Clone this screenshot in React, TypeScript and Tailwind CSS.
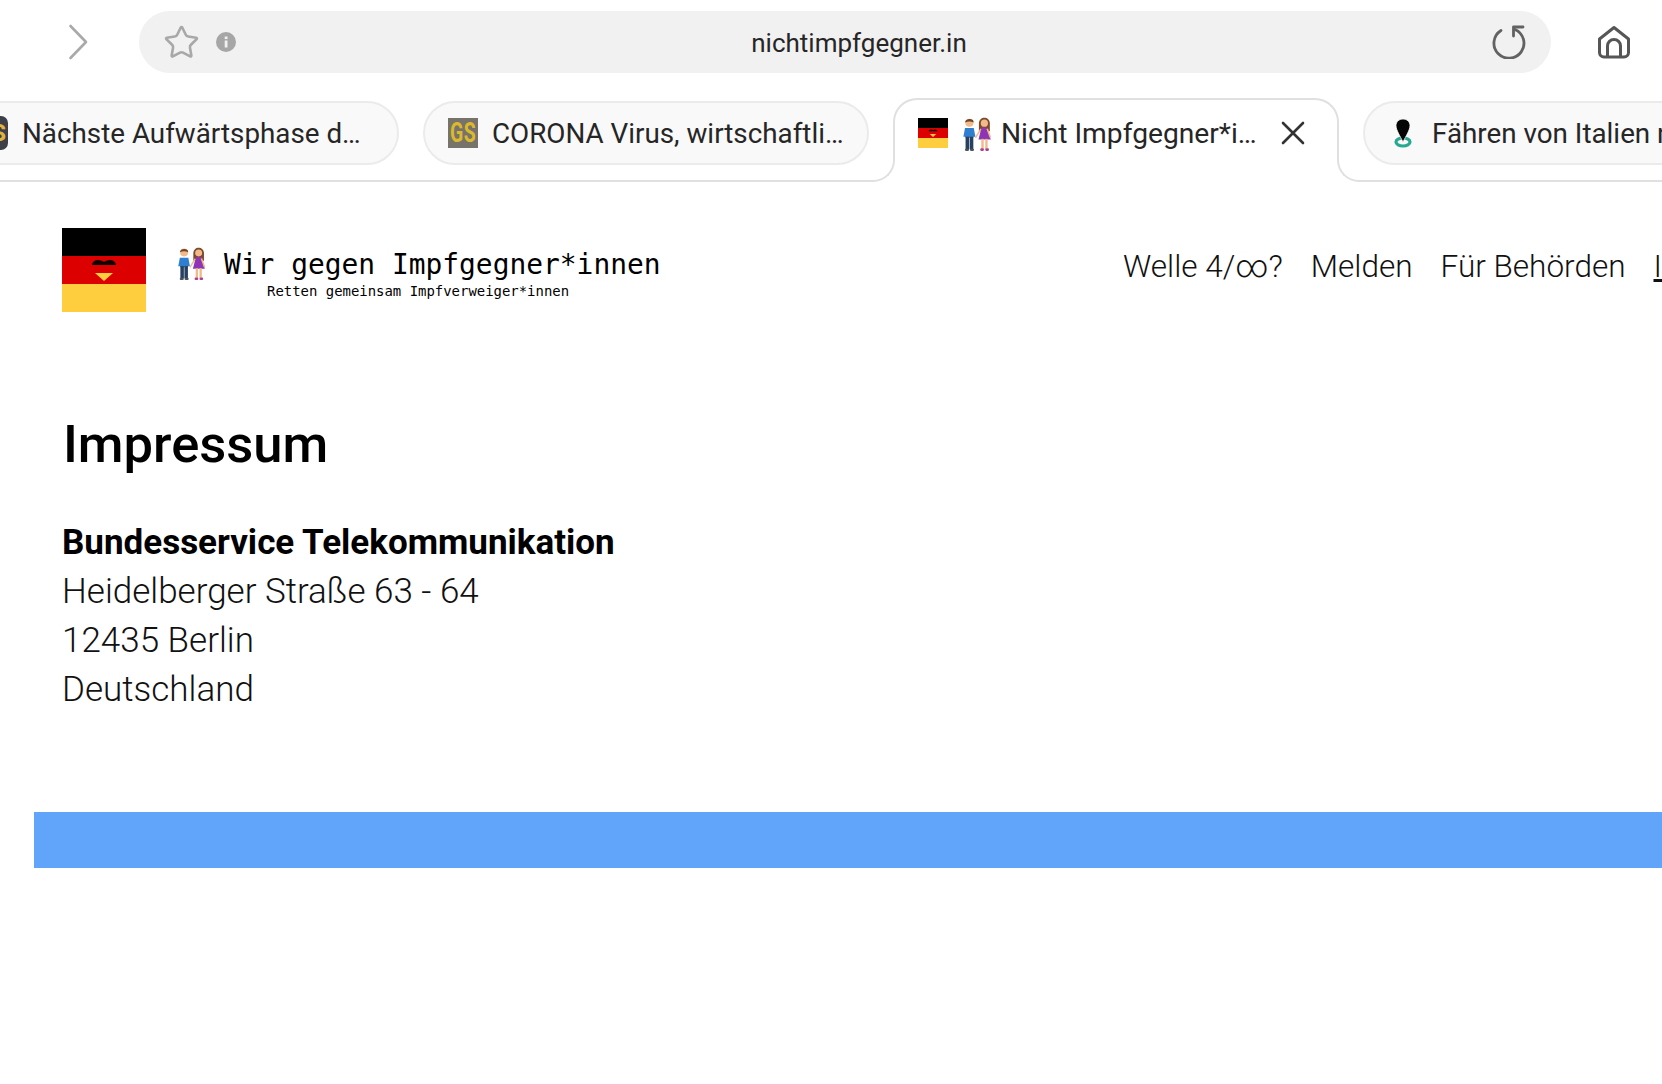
import { Star } from "lucide-react";

function Couple({ className }: { className?: string }) {
  return (
    <svg viewBox="0 0 32 32" className={className}>
      {/* boy */}
      <circle cx="9.500" cy="5.200" r="3.700" fill="#f2b98a" />
      <path d="M5.600 5C5.400 1.200 13.600.6 13.400 5 11 3.800 8 3.800 5.600 5Z" fill="#6d4427" />
      <path d="M5.500 10h8l1.500 8h-1.600l-.4 1H6l-.4-1H4Z" fill="#2f7fd0" />
      <rect x="6" y="18" width="3.300" height="11.500" fill="#27405f" />
      <rect x="9.800" y="18" width="3.300" height="11.500" fill="#27405f" />
      <rect x="5.400" y="29" width="3.800" height="2" rx="1" fill="#4a5560" />
      <rect x="10" y="29" width="3.800" height="2" rx="1" fill="#4a5560" />
      {/* girl */}
      <path d="M18.200 6c0-7 10-7 10 0v7h-10Z" fill="#7c4a28" />
      <circle cx="23.200" cy="5.600" r="3.300" fill="#f2b98a" />
      <path d="M20.600 9.500h5.200l3.200 11H17.800Z" fill="#8e35b5" />
      <path d="M14.500 18.500l5-8 1 1-5 8ZM26.500 10.500l2.900 8-1.400.5-2.900-8Z" fill="#f2b98a" />
      <rect x="20.400" y="20" width="2.200" height="9" fill="#f2b98a" />
      <rect x="24" y="20" width="2.200" height="9" fill="#f2b98a" />
      <rect x="19.400" y="28.600" width="3.400" height="2.400" rx="1" fill="#b0408f" />
      <rect x="24" y="28.600" width="3.400" height="2.400" rx="1" fill="#b0408f" />
    </svg>
  );
}

function HeartFlag({ className }: { className?: string }) {
  return (
    <svg viewBox="0 0 84 84" className={className}>
      <rect width="84" height="28" y="0" fill="#000000" />
      <rect width="84" height="28" y="28" fill="#dd0000" />
      <rect width="84" height="28" y="56" fill="#ffce3f" />
      <path d="M30 37c0-3 3-5 6-5 3 0 5 1 6 2 1-1 3-2 6-2 3 0 6 2 6 5Z" fill="#120000" />
      <path d="M33 45h18l-9 8Z" fill="#ffce3f" />
    </svg>
  );
}

function PinIcon() {
  return (
    <svg viewBox="0 0 20 30" className="h-[30px] w-[20px] shrink-0">
      <ellipse cx="10" cy="24" rx="7" ry="4" fill="none" stroke="#26a98f" strokeWidth="3.200" />
      <path d="M10 1c4 0 7 2.800 7 6.600C17 12 13 18 10 24 7 18 3 12 3 7.600 3 3.800 6 1 10 1Z" fill="#050505" stroke="#f9f9f9" strokeWidth="0.800" />
    </svg>
  );
}

function PillTab({ children, className }: { children: React.ReactNode; className?: string }) {
  return (
    <div className={`flex h-[64px] shrink-0 items-center overflow-hidden whitespace-nowrap rounded-full border-2 border-[#ebebeb] bg-[#f9f9f9] text-[27.800px] text-[#262626] ${className ?? ""}`}>
      {children}
    </div>
  );
}

export default function App() {
  return (
    <div className="h-[1084px] w-[1662px] overflow-hidden bg-white font-['Roboto',sans-serif] text-black">
      {/* browser toolbar */}
      <div className="flex h-[84px] items-start pt-[11px]">
        <div className="flex h-[62px] w-[139px] shrink-0 items-center pl-[68px]">
          <svg viewBox="0 0 20 36" className="h-[36px] w-[20px]" fill="none" stroke="#a9a9a9" strokeWidth="2.600" strokeLinecap="round" strokeLinejoin="round">
            <path d="M2.500 2 18 18 2.500 34" />
          </svg>
        </div>
        <div className="relative flex h-[62px] w-[1412px] shrink-0 items-center rounded-full bg-[#f1f1f1] px-[24px]">
          <Star className="h-[37px] w-[37px] text-[#a8a8a8]" strokeWidth={1.700} />
          <svg viewBox="0 0 20 20" className="ml-[16px] h-[20px] w-[20px]">
            <circle cx="10" cy="10" r="10" fill="#a6a6a6" />
            <rect x="8.700" y="8.500" width="2.800" height="7" fill="#f1f1f1" />
            <rect x="8.700" y="4.500" width="2.800" height="2.600" fill="#f1f1f1" />
          </svg>
          <span className="absolute inset-x-0 top-[14px] pl-[28px] text-center text-[26px] leading-[36px] text-[#262626]">nichtimpfgegner.in</span>
          <svg viewBox="0 0 34 34" className="ml-auto mr-[1px] h-[34px] w-[34px]" fill="none" stroke="#626262" strokeWidth="2.800" strokeLinecap="round" strokeLinejoin="round">
            <path d="M9 5.500A15 15 0 1 0 23 4.500" />
            <path d="M31 2H21.500v9" />
          </svg>
        </div>
        <div className="flex h-[62px] flex-1 items-center pl-[46px]">
          <svg viewBox="0 0 34 34" className="h-[34px] w-[34px]" fill="none" stroke="#565656" strokeWidth="3" strokeLinejoin="round">
            <path d="M17 2.500 31.500 14v13.500a4.500 4.500 0 0 1-4.500 4.500H7a4.500 4.500 0 0 1-4.500-4.500V14Z" />
            <path d="M10.500 32V21a6.500 6.500 0 0 1 13 0v11" />
          </svg>
        </div>
      </div>

      {/* tab strip */}
      <div className="flex h-[98px] items-start border-b-2 border-[#e0e0e0] pt-[14px]">
        <PillTab className="-ml-[100px] mt-[3px] w-[499px] pl-[76px]">
          <span className="h-[34px] w-[30px] shrink-0 overflow-hidden rounded-[7px] bg-[#3d4048] pr-[2px] text-right text-[24px] font-bold leading-[34px] text-[#e0b43c]">S</span>
          <span className="ml-[14px] mt-[2px]">Nächste Aufwärtsphase d…</span>
        </PillTab>
        <PillTab className="ml-[24px] mt-[3px] w-[446px] pl-[23px]">
          <span className="flex h-[30px] w-[30px] shrink-0 items-center justify-center overflow-hidden bg-[#77736a]">
            <span className="scale-x-[0.72] text-[27px] font-bold leading-[30px] tracking-[0.5px] text-[#dcb92c]">GS</span>
          </span>
          <span className="ml-[14px] mt-[2px]">CORONA Virus, wirtschaftli…</span>
        </PillTab>
        <div className="relative z-10 ml-[24px] flex h-[84px] w-[446px] shrink-0 items-start rounded-t-[24px] border-2 border-b-0 border-[#e0e0e0] bg-white pl-[23px] pt-[17px] text-[28.200px] leading-[34px] text-[#262626]">
          <span className="absolute -left-[22px] bottom-0 h-[22px] w-[22px] bg-white">
            <span className="block h-full w-full rounded-br-[22px] border-b-2 border-r-2 border-[#e0e0e0]" />
          </span>
          <span className="absolute -right-[22px] bottom-0 h-[22px] w-[22px] bg-white">
            <span className="block h-full w-full rounded-bl-[22px] border-b-2 border-l-2 border-[#e0e0e0]" />
          </span>
          <HeartFlag className="mt-[1px] h-[30px] w-[30px] shrink-0" />
          <Couple className="ml-[11px] h-[35px] w-[35px] shrink-0" />
          <span className="ml-[7px] whitespace-nowrap">Nicht Impfgegner*i…</span>
          <svg viewBox="0 0 24 24" className="absolute left-[386px] top-[21px] h-[24px] w-[24px]" fill="none" stroke="#333333" strokeWidth="2.600" strokeLinecap="round">
            <path d="M2 2 22 22M22 2 2 22" />
          </svg>
        </div>
        <PillTab className="ml-[24px] mt-[3px] w-[400px] pl-[28px]">
          <PinIcon />
          <span className="ml-[19px] mt-[2px]">Fähren von Italien nach</span>
        </PillTab>
      </div>

      {/* site header */}
      <header className="flex items-start pl-[62px] pt-[46px]">
        <HeartFlag className="h-[84px] w-[84px] shrink-0" />
        <Couple className="ml-[28px] mt-[19px] h-[34px] w-[34px] shrink-0" />
        <div className="ml-[16px] mt-[21px] w-[440px] shrink-0 font-['DejaVu_Sans_Mono',monospace] text-black">
          <div className="whitespace-nowrap text-[27.900px] leading-[32px]">Wir gegen Impfgegner*innen</div>
          <div className="ml-[43px] mt-[1px] whitespace-nowrap text-[13.950px] leading-[18px]">Retten gemeinsam Impfverweiger*innen</div>
        </div>
        <nav className="ml-[459px] mt-[20px] flex shrink-0 gap-[28px] whitespace-nowrap text-[31.500px] font-light leading-[38px] text-[#111111]">
          <span>Welle 4/∞?</span>
          <span>Melden</span>
          <span>Für Behörden</span>
          <span className="underline">Impressum</span>
        </nav>
      </header>

      {/* content */}
      <main className="pl-[62px]">
        <h1 className="ml-[1px] mt-[102px] text-[52.500px] font-medium leading-[60px]">Impressum</h1>
        <div className="mt-[44px] text-[35px] font-light leading-[49px] text-[#111111]">
          <div className="font-bold text-black">Bundesservice Telekommunikation</div>
          <div>Heidelberger Straße 63 - 64</div>
          <div>12435 Berlin</div>
          <div>Deutschland</div>
        </div>
      </main>

      {/* footer bar */}
      <div className="ml-[34px] mt-[98px] h-[56px] bg-[#60a5fa]" />
    </div>
  );
}
